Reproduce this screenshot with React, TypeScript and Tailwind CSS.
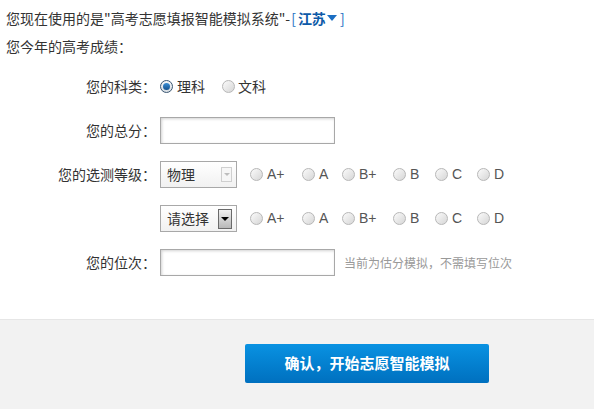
import React from 'react';

const cjk = { fontFamily: '"Noto Sans CJK SC", "Noto Sans", sans-serif' };
const latin = { fontFamily: '"Liberation Sans", Arial, sans-serif' };

function Radio({ checked = false }: { checked?: boolean }) {
  if (checked) {
    return (
      <span className="flex h-[13px] w-[13px] shrink-0 items-center justify-center rounded-full border border-[#3a5672] bg-gradient-to-b from-[#f4f6f8] to-[#d7dde3]">
        <span className="h-[7px] w-[7px] rounded-full bg-gradient-to-b from-[#3b8fd6] to-[#14528e]" />
      </span>
    );
  }
  return (
    <span className="h-[13px] w-[13px] shrink-0 rounded-full border border-[#b7b7b7] bg-gradient-to-br from-[#fbfbfb] to-[#d6d6d6]" />
  );
}

const grades = [
  { label: 'A+', w: 'w-[52px]' },
  { label: 'A', w: 'w-[40px]' },
  { label: 'B+', w: 'w-[51px]' },
  { label: 'B', w: 'w-[42px]' },
  { label: 'C', w: 'w-[42px]' },
  { label: 'D', w: 'w-auto' },
];

function GradeRadios() {
  return (
    <div className="ml-[13px] flex items-center">
      {grades.map((g) => (
        <label key={g.label} className={`flex items-center ${g.w}`}>
          <Radio />
          <span className="ml-[4px] text-[14px] text-[#555]" style={latin}>
            {g.label}
          </span>
        </label>
      ))}
    </div>
  );
}

function Row({ label, children }: { label?: string; children: React.ReactNode }) {
  return (
    <div className="flex h-[27px] items-center">
      <div className="w-[156px] text-right text-[14px] text-[#333]">{label}</div>
      <div className="ml-[4px] flex items-center">{children}</div>
    </div>
  );
}

function TextInput() {
  return (
    <input
      type="text"
      className="h-[27px] w-[175px] border border-[#a8a8a8] bg-white shadow-[inset_1px_1px_3px_rgba(0,0,0,0.18)] outline-none"
    />
  );
}

function FakeSelect({ value, disabled = false }: { value: string; disabled?: boolean }) {
  return (
    <div className="flex h-[27px] w-[77px] items-center border border-[#a8a8a8] bg-gradient-to-b from-white to-[#f1f1f1] pl-[6px]">
      <span className="text-[14px] text-[#333]">{value}</span>
      {disabled ? (
        <span className="ml-auto mr-[4px] flex h-[15px] w-[11px] items-center justify-center border border-[#cfcfcf] bg-[#f6f6f6]">
          <span className="h-0 w-0 border-l-[3px] border-r-[3px] border-t-[3px] border-l-transparent border-r-transparent border-t-[#bdbdbd]" />
        </span>
      ) : (
        <span className="ml-auto mr-[4px] flex h-[20px] w-[14px] items-center justify-center border border-[#6a6a6a] bg-gradient-to-b from-[#f0f0f0] to-[#b8b8b8]">
          <span className="h-0 w-0 border-l-[4px] border-r-[4px] border-t-[4px] border-l-transparent border-r-transparent border-t-black" />
        </span>
      )}
    </div>
  );
}

export default function App() {
  return (
    <div className="flex min-h-screen flex-col bg-white text-[#333]" style={cjk}>
      <div className="px-[6px] pt-[8px]">
        <div className="flex h-[20px] items-center text-[14px] leading-[20px]">
          <span>您现在使用的是"高考志愿填报智能模拟系统"-</span>
          <span className="ml-[1px] flex items-center text-[#1b6ec2]">
            [
            <span className="ml-[2px] font-bold text-[#0d5aa8]">江苏</span>
            <span className="ml-[1px] h-0 w-0 border-l-[5px] border-r-[5px] border-t-[6px] border-l-transparent border-r-transparent border-t-[#1b6ec2]" />
            <span className="ml-[3px]">]</span>
          </span>
        </div>
        <div className="mt-[8px] h-[20px] text-[14px] leading-[20px]">您今年的高考成绩：</div>
      </div>

      <div className="mt-[17px] flex flex-col gap-[17px]">
        <Row label="您的科类：">
          <label className="flex items-center">
            <Radio checked />
            <span className="ml-[4px] text-[14px] text-[#333]">理科</span>
          </label>
          <label className="ml-[17px] flex items-center">
            <Radio />
            <span className="ml-[3px] text-[14px] text-[#333]">文科</span>
          </label>
        </Row>
        <Row label="您的总分：">
          <TextInput />
        </Row>
        <Row label="您的选测等级：">
          <FakeSelect value="物理" disabled />
          <GradeRadios />
        </Row>
        <Row>
          <FakeSelect value="请选择" />
          <GradeRadios />
        </Row>
        <Row label="您的位次：">
          <TextInput />
          <span className="ml-[9px] text-[12px] text-[#999]">当前为估分模拟，不需填写位次</span>
        </Row>
      </div>

      <div className="mt-[43px] flex-1 border-t border-[#e6e6e6] bg-[#f2f2f2] pl-[245px] pt-[24px]">
        <button className="h-[39px] w-[244px] rounded-[2px] bg-gradient-to-b from-[#0a92e2] to-[#0070bf] text-[15px] font-bold text-white">
          确认，开始志愿智能模拟
        </button>
      </div>
    </div>
  );
}
